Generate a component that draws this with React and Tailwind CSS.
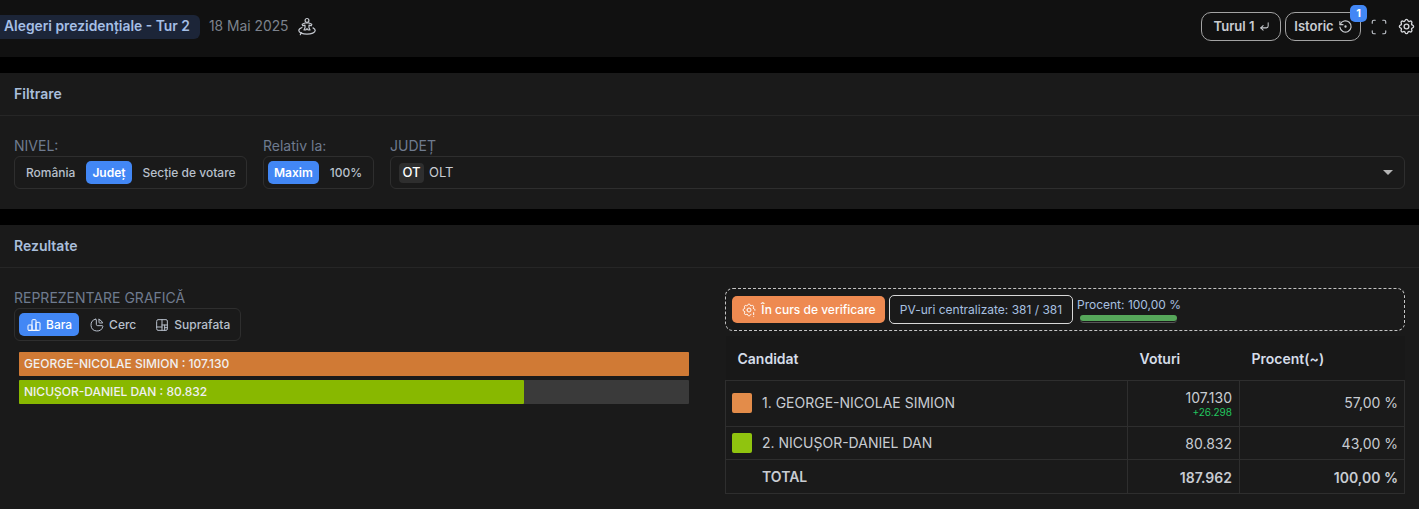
import React from 'react';
import { CornerDownLeft, Scan } from 'lucide-react';
import { TbChartBar, TbChartPie, TbChartTreemap, TbRestore, TbSettings, TbSettingsExclamation } from 'react-icons/tb';

const PersonSpin = () => (
  <svg width="20" height="20" viewBox="0 0 20 20" fill="none" stroke="currentColor" strokeWidth="1.2" strokeLinejoin="round" strokeLinecap="round">
    <circle cx="10" cy="3.4" r="1.9" />
    <path d="M8 6h4l2.800 1.200-.6 1.600-2.200-.7v2.600l1 2.300h-1.700L10 11.800 8.700 13H7l1-2.300V8.100l-2.200.7-.6-1.600z" />
    <path d="M5 10.500C3 11.300 1.800 12.300 1.800 13.500c0 2 3.700 3.700 8.200 3.700 4.500 0 8.200-1.700 8.200-3.700 0-1-.8-1.900-2.200-2.600" />
    <path d="M4.300 15.500l-1 2.200" />
  </svg>
);

const Segment = ({ items, active, className }) => (
  <div className={`flex h-[33px] items-center gap-[4px] rounded-md border border-[#2e2e2e] pl-[4px] ${className}`}>
    {items.map((item) => (
      <div
        key={item}
        className={`flex h-[23px] items-center rounded-[5px] text-[12px] ${item === active ? 'bg-[#4287f5] px-[6px] font-semibold text-white' : 'px-[7px] font-medium text-[#b8c0cc]'}`}
      >
        {item}
      </div>
    ))}
  </div>
);

const ChartTab = ({ icon: Icon, label, active }) => (
  <div className={`flex h-[23px] items-center gap-[4px] rounded-[5px] text-[12px] font-medium ${active ? 'bg-[#4287f5] px-[7px] text-white' : 'px-[8px] text-[#b8c0cc]'}`}>
    <Icon size={16} strokeWidth={1.5} />
    {label}
  </div>
);

const Bar = ({ label, color, width }) => (
  <div className="h-[24px] bg-[#3a3a3a] rounded-[1px]">
    <div className="flex h-full items-center rounded-[1px] pl-[5px] text-[12px] font-medium text-[#f0f0f0] whitespace-nowrap" style={{ width, backgroundColor: color }}>
      {label}
    </div>
  </div>
);

export default function App() {
  return (
    <div className="h-[509px] overflow-hidden bg-black font-['Inter',sans-serif]">
      {/* Header */}
      <div className="flex h-[57px] items-center justify-between bg-[#111111] pr-[3px] pb-[4px]">
        <div className="flex items-center">
          <div className="flex h-[24px] items-center rounded-r-md bg-[#1c2538] pl-[4px] pr-[10px] text-[13.85px] font-semibold text-[#a5bfe6]">
            Alegeri prezidențiale - Tur 2
          </div>
          <span className="ml-[9px] text-[13.85px] text-[#7d838d]">18 Mai 2025</span>
          <span className="ml-[8px] text-[#c4c8cf]"><PersonSpin /></span>
        </div>
        <div className="flex items-center">
          <div className="flex h-[29px] w-[80px] items-center justify-center gap-[5px] rounded-[10px] border border-[#a3a3a3] pl-[2px] text-[13px] font-semibold text-[#c9ccd1]">
            Turul 1 <CornerDownLeft size={11} strokeWidth={2.2} />
          </div>
          <div className="relative ml-[4px] flex h-[29px] w-[76px] items-center justify-center gap-[4px] rounded-[10px] border border-[#a3a3a3] pl-[1px] text-[13px] font-semibold text-[#c9ccd1]">
            Istoric <TbRestore size={15} strokeWidth={1.8} />
            <span className="absolute -top-[8px] right-[-7px] flex h-[17px] w-[17px] items-center justify-center rounded-[5px] bg-[#4287f5] text-[11px] font-bold text-white">1</span>
          </div>
          <Scan size={18} strokeWidth={1.5} className="ml-[9px] text-[#c4c8cf]" />
          <TbSettings size={19} strokeWidth={1.7} className="ml-[9px] text-[#d4d6da]" />
        </div>
      </div>

      {/* Filtrare */}
      <section className="mt-[16px] h-[136px] bg-[#1a1a1a]">
        <div className="flex h-[43px] items-center border-b border-[#262626] px-[14px] pb-[2px] text-[14px] font-semibold text-[#a9bedb]">Filtrare</div>
        <div className="flex gap-[16px] px-[14px] pt-[20px]">
          <div>
            <div className="h-[20px] text-[14px] leading-[20px] text-[#6f7b8f]">NIVEL:</div>
            <Segment items={['România', 'Județ', 'Secție de votare']} active="Județ" className="w-[233px]" />
          </div>
          <div>
            <div className="h-[20px] text-[14px] leading-[20px] text-[#6f7b8f]">Relativ la:</div>
            <Segment items={['Maxim', '100%']} active="Maxim" className="w-[111px]" />
          </div>
          <div className="flex-1">
            <div className="h-[20px] text-[14px] leading-[20px] text-[#6f7b8f]">JUDEȚ</div>
            <div className="flex h-[33px] items-center justify-between rounded-md border border-[#2e2e2e] pl-[8px] pr-[11px]">
              <div className="flex items-center gap-[5px] text-[13px] text-[#c8ccd2]">
                <span className="flex h-[20px] w-[25px] items-center justify-center rounded-[4px] bg-[#2e2e2e] font-medium text-white">OT</span>
                OLT
              </div>
              <span className="h-0 w-0 border-x-[5px] border-t-[5px] border-x-transparent border-t-[#b5b5b5]" />
            </div>
          </div>
        </div>
      </section>

      {/* Rezultate */}
      <section className="mt-[16px] h-[284px] bg-[#1a1a1a]">
        <div className="flex h-[43px] items-center border-b border-[#262626] px-[14px] pb-[2px] text-[14px] font-semibold text-[#a9bedb]">Rezultate</div>
        <div className="flex pl-[14px] pr-[14px]">
          <div className="w-[675px] pt-[20px]">
            <div className="h-[20px] text-[14px] leading-[19px] text-[#6f7b8f]">REPREZENTARE GRAFICĂ</div>
            <div className="flex h-[33px] w-fit items-center gap-[2px] rounded-md border border-[#2e2e2e] pl-[4px] pr-[2px]">
              <ChartTab icon={TbChartBar} label="Bara" active />
              <ChartTab icon={TbChartPie} label="Cerc" />
              <ChartTab icon={TbChartTreemap} label="Suprafata" />
            </div>
            <div className="ml-[5px] mt-[11px] flex flex-col gap-[4px]">
              <Bar label="GEORGE-NICOLAE SIMION : 107.130" color="#d07a35" width="100%" />
              <Bar label="NICUȘOR-DANIEL DAN : 80.832" color="#88b800" width="75.4%" />
            </div>
          </div>
          <div className="ml-[36px] flex-1 pt-[20px]">
            <div className="flex h-[43px] items-center rounded-lg border border-dashed border-[#c4c4c4] pl-[6px]">
              <div className="flex h-[27px] w-[153px] items-center justify-center gap-[4px] rounded-[5px] bg-[#ee8a51] text-[12px] font-medium text-white">
                <TbSettingsExclamation size={16} strokeWidth={1.5} />
                În curs de verificare
              </div>
              <div className="ml-[4px] flex h-[29px] w-[184px] items-center justify-center rounded-[5px] border border-[#d8d8d8] text-[12px] text-[#a8c0e0]">
                PV-uri centralizate: 381 / 381
              </div>
              <div className="ml-[4px] mt-[1px] w-[103px]">
                <div className="text-[12px] leading-[15px] text-[#a8c0e0] whitespace-nowrap">Procent: 100,00 %</div>
                <div className="mt-[3px] ml-[3px] h-[8px] w-[97px] rounded-full border-b border-[#555] bg-[#1a1a1a]">
                  <div className="h-[6px] rounded-full bg-[#56a75a]" />
                </div>
              </div>
            </div>
            <table className="mt-[5px] w-[680px] table-fixed border-collapse text-[14px] text-[#c8ccd2]">
              <thead>
                <tr className="h-[44px] bg-[#181818] text-[14px] font-semibold text-[#d5dde8]">
                  <th className="w-[402px] pl-[12px] pt-[2px] text-left font-semibold">Candidat</th>
                  <th className="w-[112px] pl-[12px] pt-[2px] text-left font-semibold">Voturi</th>
                  <th className="pl-[12px] pt-[2px] text-left font-semibold">Procent(~)</th>
                </tr>
              </thead>
              <tbody>
                <tr className="h-[46px]">
                  <td className="border border-[#2e2e2e] pl-[6px] pb-[1px]">
                    <div className="flex items-center gap-[10px]">
                      <span className="h-[20px] w-[20px] rounded-[2px] bg-[#e38c4a]" />
                      1. GEORGE-NICOLAE SIMION
                    </div>
                  </td>
                  <td className="border border-[#2e2e2e] pr-[7px] pt-[2px] text-right leading-[15px]">
                    107.130
                    <div className="mt-[2px] text-[10px] leading-[11px] text-[#22c55e]">+26.298</div>
                  </td>
                  <td className="border border-[#2e2e2e] pr-[6px] pb-[1px] text-right">57,00 %</td>
                </tr>
                <tr className="h-[33px]">
                  <td className="border border-[#2e2e2e] pl-[6px]">
                    <div className="flex items-center gap-[10px]">
                      <span className="h-[20px] w-[20px] rounded-[2px] bg-[#90c40f]" />
                      2. NICUȘOR-DANIEL DAN
                    </div>
                  </td>
                  <td className="border border-[#2e2e2e] pr-[7px] pt-[1px] text-right">80.832</td>
                  <td className="border border-[#2e2e2e] pr-[6px] pt-[1px] text-right">43,00 %</td>
                </tr>
                <tr className="h-[34px] font-semibold">
                  <td className="border border-[#2e2e2e] pl-[36px] pt-[1px]">TOTAL</td>
                  <td className="border border-[#2e2e2e] pr-[7px] pt-[2px] text-right">187.962</td>
                  <td className="border border-[#2e2e2e] pr-[6px] pt-[2px] text-right">100,00 %</td>
                </tr>
              </tbody>
            </table>
          </div>
        </div>
      </section>
    </div>
  );
}
